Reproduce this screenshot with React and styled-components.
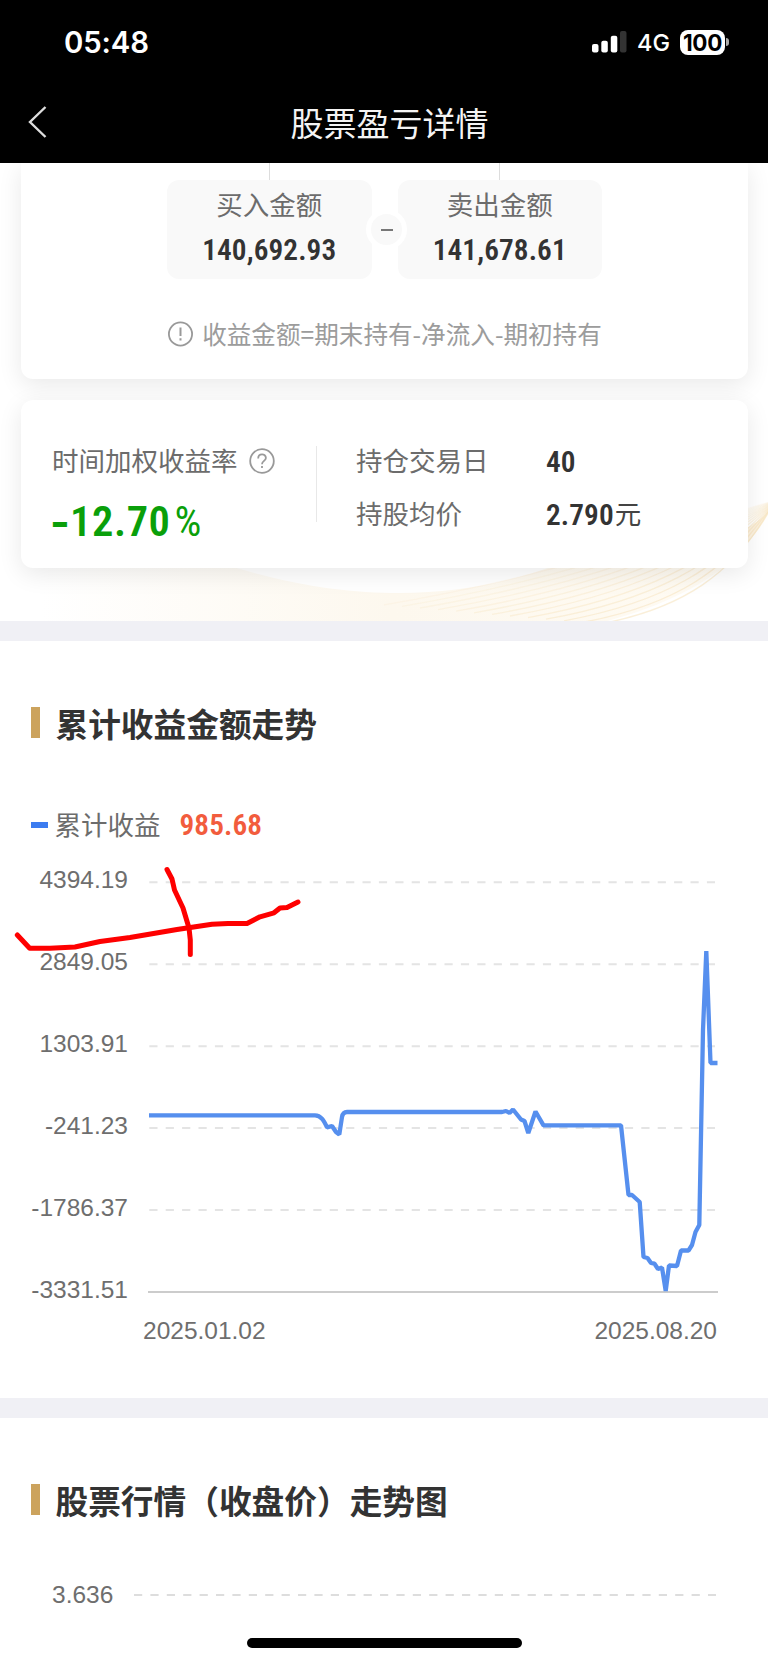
import styled, { createGlobalStyle } from "styled-components";

const yLabels = ["4394.19", "2849.05", "1303.91", "-241.23", "-1786.37", "-3331.51"];
const waves = [0, 1, 2, 3, 4, 5, 6, 7, 8, 9, 10, 11, 12];

const App = () => {
    return (
        <>
            <GlobalStyle />
            <Phone>
                <StatusBar>
                    <Time>05:48</Time>
                    <StatusRight>
                        <svg width="35" height="22" viewBox="0 0 35 22">
                            <rect x="0" y="13" width="6.5" height="8.5" rx="2" fill="#fff" />
                            <rect x="9.3" y="9.7" width="6.5" height="11.8" rx="2" fill="#fff" />
                            <rect x="18.8" y="4.7" width="6.5" height="16.8" rx="2" fill="#fff" />
                            <rect x="28" y="0" width="6.5" height="21.5" rx="2" fill="#333" />
                        </svg>
                        <Network>4G</Network>
                        <Battery>100</Battery>
                        <BatteryCap />
                    </StatusRight>
                </StatusBar>
                <NavBar>
                    <BackIcon viewBox="0 0 20 34">
                        <path d="M17.5 2 L2 17 L17.5 32" fill="none" stroke="#ddd" strokeWidth="2.4" />
                    </BackIcon>
                    <NavTitle>股票盈亏详情</NavTitle>
                    <NavSpacer />
                </NavBar>

                <Summary>
                    <SummaryArt viewBox="0 0 768 458">
                        <defs>
                            <linearGradient id="cream" x1="0" x2="1" y1="0" y2="0">
                                <stop offset="0" stopColor="#fdf8ee" stopOpacity="0" />
                                <stop offset="0.5" stopColor="#fdf8ee" />
                                <stop offset="1" stopColor="#fffbf3" />
                            </linearGradient>
                        </defs>
                        <path
                            d="M40 400H220C290 422 345 430 400 430C470 430 530 415 600 385H745L723 405C690 430 650 447 600 460H40Z"
                            fill="url(#cream)"
                        />
                        <path d="M772 341C766 354 758 358 744 367V384C756 370 764 360 772 344Z" fill="#fdf3e0" />
                        {waves.map((i) => (
                            <path
                                key={i}
                                d={`M772 ${342 - i * 0.3}C${735 - i * 6} ${412 - i * 3.5} ${680 - i * 9} ${446 - i * 3} ${600 - i * 18} ${461 - i * 1.6}`}
                                fill="none"
                                stroke="#f6dfb4"
                                strokeWidth="1.3"
                                opacity={0.5 - i * 0.03}
                            />
                        ))}
                    </SummaryArt>
                    <AmountCard>
                        <Amounts>
                            <AmountColumn>
                                <Stem />
                                <AmountBox>
                                    <Label>买入金额</Label>
                                    <Num>140,692.93</Num>
                                </AmountBox>
                            </AmountColumn>
                            <AmountColumn>
                                <Stem />
                                <AmountBox>
                                    <Label>卖出金额</Label>
                                    <Num>141,678.61</Num>
                                </AmountBox>
                            </AmountColumn>
                            <Minus />
                        </Amounts>
                        <Note>
                            <svg width="26" height="26" viewBox="0 0 26 26" fill="none" stroke="#999" strokeWidth="1.8">
                                <circle cx="13.5" cy="13" r="11.6" />
                                <path d="M13.5 6.5V15M13.5 17.3V19.6" strokeWidth="2" />
                            </svg>
                            <NoteText>收益金额=期末持有-净流入-期初持有</NoteText>
                        </Note>
                    </AmountCard>
                    <RateCard>
                        <RateLeft>
                            <RateLabel>
                                <Label>时间加权收益率</Label>
                                <svg width="26" height="26" viewBox="0 0 26 26" fill="none" stroke="#999" strokeWidth="1.8">
                                    <circle cx="13" cy="13" r="11.8" />
                                    <path d="M9.2 10.4C9.2 4.9 16.9 5.2 16.9 10C16.9 12.8 13 13.1 13 16.2M13 18V20" />
                                </svg>
                            </RateLabel>
                            <Rate><Sign>-</Sign>12.70<Percent>%</Percent></Rate>
                        </RateLeft>
                        <Divider />
                        <Facts>
                            <Label>持仓交易日</Label>
                            <Num>40</Num>
                            <Label>持股均价</Label>
                            <Fact><Num>2.790</Num><Unit>元</Unit></Fact>
                        </Facts>
                    </RateCard>
                </Summary>

                <Gap />

                <Section $height={757}>
                    <SectionTitle>累计收益金额走势</SectionTitle>
                    <Legend>
                        <LegendMark />
                        <Label>累计收益</Label>
                        <LegendValue>985.68</LegendValue>
                    </Legend>
                    <ChartArea>
                        <YAxis>
                            {yLabels.map((label) => (
                                <AxisText key={label}>{label}</AxisText>
                            ))}
                        </YAxis>
                        <Plot width="580" height="420" viewBox="145 880 580 420">
                            {[882.3, 964.2, 1046.2, 1128.1, 1210].map((y) => (
                                <path key={y} d={`M149.3 ${y}H715`} stroke="#e4e4e4" strokeWidth="2" strokeDasharray="8.2 8.2" />
                            ))}
                            <path d="M148 1292H718" stroke="#ccc" strokeWidth="2" />
                            <path
                                d="M149 1115.3H315C321 1115.3 324 1121 327 1127.3L332 1126L336 1132L339.3 1134.5L342 1117Q343 1112 347 1112H502L506 1111L509.5 1113L513 1109.5L521 1119.5L524.5 1121L528.3 1133L535.5 1111.5L543.5 1125.3H621L628.5 1195H632L639.7 1202L643.5 1257L647.5 1258L651 1263L654.5 1263.7L658 1269L662 1267.5L665.7 1291L669 1265.5L677 1266L681 1250.5H688.5L692 1245L695.5 1232L699.3 1225L703 1030L706.3 951L710.5 1063H717.5"
                                fill="none"
                                stroke="#568fee"
                                strokeWidth="4.3"
                                strokeLinejoin="bevel"
                            />
                        </Plot>
                        <Pen width="310" height="110" viewBox="0 860 310 110" fill="none" stroke="#fe0000">
                            <path d="M17.3 935L29.7 948.3H50L75 947L100 941.5L130 937.5L177 929.5L212 924.3L228 923.5H247L260 916.8L274 912.8L280 908L287 907.5L298 902" />
                            <path d="M167 869.5L172 879L174.5 890L183 908L189 928L190.3 940V954.5" />
                        </Pen>
                    </ChartArea>
                    <Dates>
                        <AxisText>2025.01.02</AxisText>
                        <AxisText>2025.08.20</AxisText>
                    </Dates>
                </Section>

                <Gap />

                <Section $height={246}>
                    <SectionTitle>股票行情（收盘价）走势图</SectionTitle>
                    <PriceRow>
                        <AxisText>3.636</AxisText>
                        <svg width="584" height="2" viewBox="0 0 584 2">
                            <path d="M0 1H582" stroke="#ddd" strokeWidth="2" strokeDasharray="8.2 8.2" />
                        </svg>
                    </PriceRow>
                </Section>
                <HomeBar />
            </Phone>
        </>
    )
}

const GlobalStyle = createGlobalStyle`
* {
    box-sizing: border-box;
}
body {
    margin: 0;
    background-color: #fff;
    font-family: "Noto Sans CJK SC", sans-serif;
}
svg {
    display: block;
    flex-shrink: 0;
}
`;

const Phone = styled.div`
width: 768px;
height: 1664px;
overflow: hidden;
position: relative;
background-color: #fff;
`;

const StatusBar = styled.div`
height: 84px;
padding: 0 39px 0 64px;
display: flex;
align-items: center;
justify-content: space-between;
background-color: #000;
color: #fff;
font-family: Inter, sans-serif;
`;
const Time = styled.div`
font-size: 29.3px;
font-weight: 600;
letter-spacing: -0.1px;
`;
const StatusRight = styled.div`
display: flex;
align-items: center;
`;
const Network = styled.div`
margin-left: 10px;
width: 43px;
font-size: 23.5px;
font-weight: 500;
`;
const Battery = styled.div`
width: 45px;
height: 25px;
border-radius: 8px;
background-color: #fff;
color: #000;
font-size: 22.5px;
font-weight: 700;
letter-spacing: -0.4px;
line-height: 25px;
text-align: center;
`;
const BatteryCap = styled.div`
margin-left: 1px;
width: 3px;
height: 8px;
border-radius: 0 4px 4px 0;
background-color: #aaa;
`;

const NavBar = styled.div`
height: 79px;
padding: 0 25px 3px 28px;
display: flex;
align-items: center;
justify-content: space-between;
background-color: #000;
color: #f4f4f4;
`;
const BackIcon = styled.svg`
width: 20px;
height: 34px;
`;
const NavTitle = styled.div`
font-size: 33px;
line-height: 76px;
`;
const NavSpacer = styled.div`
width: 12px;
`;

const Summary = styled.div`
height: 458px;
padding: 0 20px 0 21px;
position: relative;
overflow: hidden;
`;
const SummaryArt = styled.svg`
position: absolute;
left: 0;
top: 0;
width: 768px;
height: 458px;
`;
const AmountCard = styled.div`
position: relative;
height: 216px;
border-radius: 0 0 12px 12px;
background-color: #fff;
box-shadow: 0 6px 24px rgba(0, 0, 0, 0.09);
`;
const Amounts = styled.div`
position: relative;
display: flex;
justify-content: center;
gap: 26px;
`;
const AmountColumn = styled.div`
display: flex;
flex-direction: column;
align-items: center;
`;
const Stem = styled.div`
width: 1px;
height: 17px;
background-color: #ddd;
`;
const AmountBox = styled.div`
width: 204.5px;
height: 99px;
padding-top: 3px;
border-radius: 12px;
background-color: #f9f9f9;
display: flex;
flex-direction: column;
align-items: center;
`;
const Label = styled.div`
padding-bottom: 2px;
font-size: 26.5px;
line-height: 42px;
color: #6c6c6c;
`;
const Num = styled.div`
font-family: Roboto, sans-serif;
font-size: 29.3px;
font-weight: 580;
font-stretch: 85%;
letter-spacing: 0.1px;
line-height: 47px;
color: #333;
`;
const Minus = styled.div`
position: absolute;
left: 345px;
top: 46px;
width: 41px;
height: 41px;
border: 5px solid #fff;
border-radius: 50%;
background-color: #f9f9f9;
display: flex;
align-items: center;
justify-content: center;
&::before {
    content: "";
    width: 12px;
    height: 2px;
    background-color: #777;
}
`;
const Note = styled.div`
margin-top: 35px;
height: 40px;
display: flex;
align-items: center;
justify-content: center;
gap: 9px;
`;
const NoteText = styled.div`
padding-bottom: 2px;
font-size: 24.6px;
color: #9c9c9c;
`;

const RateCard = styled.div`
position: relative;
height: 168px;
margin-top: 21px;
padding: 39px 0 0 31px;
border-radius: 12px;
background-color: #fff;
box-shadow: 0 6px 24px rgba(0, 0, 0, 0.09);
display: flex;
`;
const RateLeft = styled.div`
width: 264px;
`;
const RateLabel = styled.div`
display: flex;
align-items: center;
gap: 11px;
`;
const Rate = styled.div`
display: flex;
font-family: Roboto, sans-serif;
font-size: 42.5px;
font-weight: 580;
font-stretch: 84%;
letter-spacing: 0.6px;
line-height: 77px;
color: #0a9f0a;
`;
const Sign = styled.span`
width: 20px;
margin-left: -2px;
font-family: Inter, sans-serif;
font-weight: 700;
`;
const Percent = styled.span`
margin-left: 4px;
font-weight: 450;
font-stretch: 77%;
`;
const Divider = styled.div`
width: 1px;
height: 76px;
margin: 7px 39px 0 0;
background-color: #e8e8e8;
`;
const Facts = styled.div`
display: grid;
grid-template-columns: 190px auto;
grid-template-rows: 44px 44px;
row-gap: 9px;
align-content: start;
`;
const Fact = styled.div`
display: flex;
`;
const Unit = styled(Label)`
margin-left: 1px;
color: #444;
`;

const Gap = styled.div`
height: 20px;
background-color: #f0f0f5;
`;

const Section = styled.div`
height: ${props => props.$height}px;
padding-left: 31px;
display: flex;
flex-direction: column;
`;
const SectionTitle = styled.h2`
margin: 56px 0 0;
height: 50px;
display: flex;
align-items: center;
font-size: 32.7px;
font-weight: 600;
color: #333;
&::before {
    content: "";
    width: 8.5px;
    height: 31px;
    margin-right: 16px;
    background-color: #cca35d;
}
`;
const Legend = styled.div`
margin-top: 53px;
height: 50px;
display: flex;
align-items: center;
`;
const LegendMark = styled.div`
width: 16.5px;
height: 6px;
margin-right: 7px;
background-color: #3c7cf0;
`;
const LegendValue = styled(Num)`
padding-top: 1px;
margin-left: 19px;
color: #f25c3d;
`;

const AxisText = styled.div`
font-family: "Liberation Sans", Arial, sans-serif;
font-size: 24.5px;
line-height: 30px;
color: #6e6e6e;
`;
const ChartArea = styled.div`
position: relative;
height: 460px;
display: flex;
margin-top: 15px;
`;
const YAxis = styled.div`
width: 97px;
display: flex;
flex-direction: column;
align-items: flex-end;
gap: 52px;
`;
const Plot = styled.svg`
margin: 15px 0 0 17px;
`;
const Pen = styled.svg`
position: absolute;
left: -31px;
top: -5px;
stroke-width: 5px;
stroke-linecap: round;
stroke-linejoin: round;
`;
const Dates = styled.div`
margin: -9px 51px 0 112px;
display: flex;
justify-content: space-between;
`;

const PriceRow = styled.div`
margin: 56px 0 0 21px;
display: flex;
align-items: center;
gap: 21px;
`;
const HomeBar = styled.div`
position: absolute;
left: 247px;
bottom: 16px;
width: 275px;
height: 10px;
border-radius: 5px;
background-color: #000;
`;

export default App;
